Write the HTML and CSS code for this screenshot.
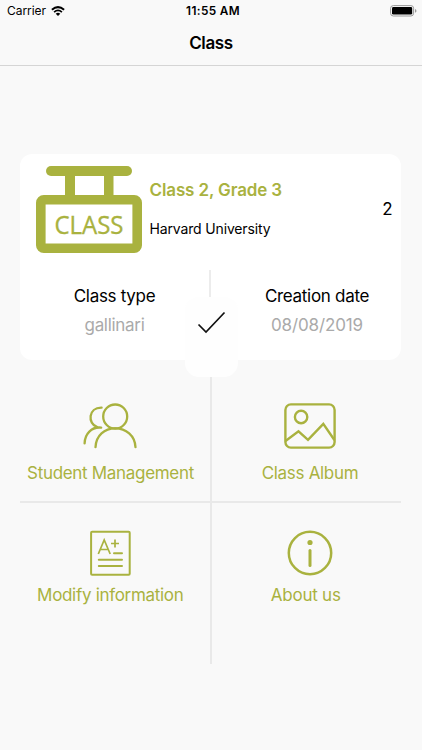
FILE: index.html
```html
<!DOCTYPE html>
<html lang="en">
<head>
<meta charset="utf-8">
<title>Class</title>
<link rel="stylesheet" href="styles.css">
</head>
<body>
<header class="header">
  <div class="status">
    <div class="carrier"><span>Carrier</span>
      <svg width="14" height="10" viewBox="0 0 14 10"><path d="M.9 3.8Q7-1.5 13.1 3.8" fill="none" stroke="#000" stroke-width="2"/><path d="M3.1 6.1Q7 2.7 10.9 6.1" fill="none" stroke="#000" stroke-width="1.8"/><path d="M7 10 4.7 7.7Q7 5.9 9.3 7.7Z"/></svg>
    </div>
    <span class="time">11:55 AM</span>
    <svg class="battery" width="27" height="12" viewBox="0 0 27 12"><rect x=".6" y=".6" width="23" height="10.4" rx="2.7" fill="none" stroke="#999"/><rect x="2" y="2" width="20.2" height="7.6" rx="1.4"/><path d="M25 4v3.8Q26.5 7 26.5 5.9T25 4" fill="#999"/></svg>
  </div>
  <h1 class="title">Class</h1>
</header>
<main class="main">
  <section class="card">
    <div class="summary">
      <svg class="sign" width="106" height="87" viewBox="0 0 106 87"><g fill="#a9b23f"><rect x="10" y="0" width="86" height="10" rx="5"/><rect x="29" y="8" width="10" height="24"/><rect x="68" y="8" width="9.5" height="24"/></g><rect x="4.8" y="33.8" width="96.4" height="48.4" rx="3" fill="#fff" stroke="#a9b23f" stroke-width="9.6"/><text x="18.5" y="68.2" textLength="69" lengthAdjust="spacingAndGlyphs" class="sign-text">CLASS</text></svg>
      <div class="about">
        <h2 class="name">Class 2, Grade 3</h2>
        <p class="school">Harvard University</p>
      </div>
      <span class="count">2</span>
    </div>
    <div class="details">
      <div class="detail"><span class="label">Class type</span><span class="value">gallinari</span></div>
      <i class="split"></i>
      <div class="detail"><span class="label">Creation date</span><span class="value date">08/08/2019</span></div>
    </div>
    <div class="tab"><svg width="30" height="24" viewBox="0 0 30 24"><path d="M1.5 13.5 9 21 27.5 1.5" fill="none" stroke="#111" stroke-width="1.7"/></svg></div>
  </section>
  <nav class="menu">
    <a class="item students">
      <svg width="56" height="46" viewBox="0 0 56 46" fill="none" stroke="#a9b23f" stroke-width="2.3" stroke-linecap="round"><circle cx="32.2" cy="13.5" r="12"/><path d="M12.5 44.2C13 32.5 21.5 25.3 32.2 25.3S52 32.5 52.5 44.2M18.6 4.6C5.2 4.3 4.2 20.8 14.3 24.2M18.2 24.6C8.5 23.5 1.8 31 1.6 40.4"/></svg>
      <span>Student Management</span>
    </a>
    <a class="item album">
      <svg width="52" height="46" viewBox="0 0 52 46" fill="none" stroke="#a9b23f" stroke-width="2.4"><rect x="1.4" y="1.4" width="49.2" height="43.2" rx="5.5"/><circle cx="17.1" cy="14" r="6.2"/><path d="M1.5 38 14.5 28.4 24 36.8 39.3 20.8 50.4 37"/></svg>
      <span>Class Album</span>
    </a>
    <a class="item modify">
      <svg width="41" height="46" viewBox="0 0 41 46" fill="none" stroke="#a9b23f" stroke-width="2"><rect x="1.1" y="1.7" width="38.6" height="43" rx="1"/><path d="M8.3 24 14.2 10 20.2 24M10.3 19.5H18.2M21 13.5H29M25 9.6V17.4" stroke-width="1.7"/><path d="M24 23.2H32M8.8 29.8H32M8.8 36.1H32" stroke-linecap="round"/></svg>
      <span>Modify information</span>
    </a>
    <a class="item us">
      <svg width="46" height="46" viewBox="0 0 46 46" fill="none" stroke="#a9b23f" stroke-width="2.5"><circle cx="23" cy="23" r="21.2"/><circle cx="23" cy="12.5" r="2.6" fill="#a9b23f" stroke="none"/><path d="M23 20.6V35.4" stroke-width="3" stroke-linecap="round"/></svg>
      <span>About us</span>
    </a>
  </nav>
</main>
</body>
</html>
```
FILE: styles.css
```css
* { box-sizing: border-box; }
body { margin: 0; height: 750px; background: #f9f9f9; color: #000; font-family: Inter, "Liberation Sans", sans-serif; }
h1, h2, p { margin: 0; }
svg { display: block; flex: none; }
.header { height: 66px; border-bottom: 1px solid #d5d5d5; }
.status { height: 22px; display: grid; grid-template-columns: 1fr auto 1fr; align-items: center; padding: 0 5px 0 7px; font-size: 12px; line-height: 22px; }
.carrier { display: flex; align-items: center; gap: 5px; letter-spacing: -.05px; }
.time { padding-left: 2px; font-weight: 600; font-size: 11.8px; letter-spacing: .35px; }
.battery { justify-self: end; }
.title { font-size: 17px; font-weight: 600; line-height: 42px; text-align: center; letter-spacing: -.35px; }
.main { padding: 88px 21px 0 20px; }
.card { position: relative; height: 206px; border-radius: 12px; background: #fff; }
.summary { height: 116px; display: flex; padding: 12px 8.5px 0 16px; }
.sign-text { font: 26px "Open Sans", sans-serif; fill: #a9b23f; stroke: #a9b23f; stroke-width: .35; }
.about { flex: 1; padding: 13px 0 0 7.5px; }
.name { color: #a9b23f; font-size: 17px; font-weight: 600; line-height: 22px; letter-spacing: -.12px; white-space: nowrap; }
.school { margin-top: 18px; font-size: 14px; line-height: 20px; letter-spacing: -.15px; }
.count { margin-top: 31px; font-size: 17px; line-height: 24px; }
.details { display: grid; grid-template-columns: 189px 2px 1fr; }
.split { height: 28px; background: #ececec; }
.detail { display: flex; flex-direction: column; align-items: center; padding-top: 14px; font-size: 17px; }
.label { line-height: 24px; letter-spacing: -.3px; }
.value { margin-top: 5px; line-height: 24px; color: #aaa; letter-spacing: -.3px; }
.date { letter-spacing: -.12px; }
.split + .detail { padding-left: 22px; }
.tab { position: absolute; left: 165px; top: 143px; width: 53px; height: 80px; border-radius: 14px; background: #fefefe; display: flex; justify-content: center; padding: 14px 0 0; }
.menu { display: grid; grid-template-columns: 190.5px 190.5px; grid-template-rows: 142px 162px; background: linear-gradient(#e9e9e9, #e9e9e9) 189.5px 0 / 2.2px 100% no-repeat, linear-gradient(#e9e9e9, #e9e9e9) 0 141px / 100% 2px no-repeat; }
.item { display: flex; flex-direction: column; align-items: center; color: #a9b23f; font-size: 17px; line-height: 24px; white-space: nowrap; letter-spacing: -.31px; }
.item span { margin-top: 12px; }
.students { padding: 43px 9.5px 0 0; }
.album { padding: 43px 0 0 8.5px; }
.modify { padding: 28px 10px 0 0; }
.us { padding: 28px 0 0 9px; }
.modify span { margin-top: 7px; }
.us span { margin: 7px 9px 0 0; letter-spacing: -.25px; }
```
